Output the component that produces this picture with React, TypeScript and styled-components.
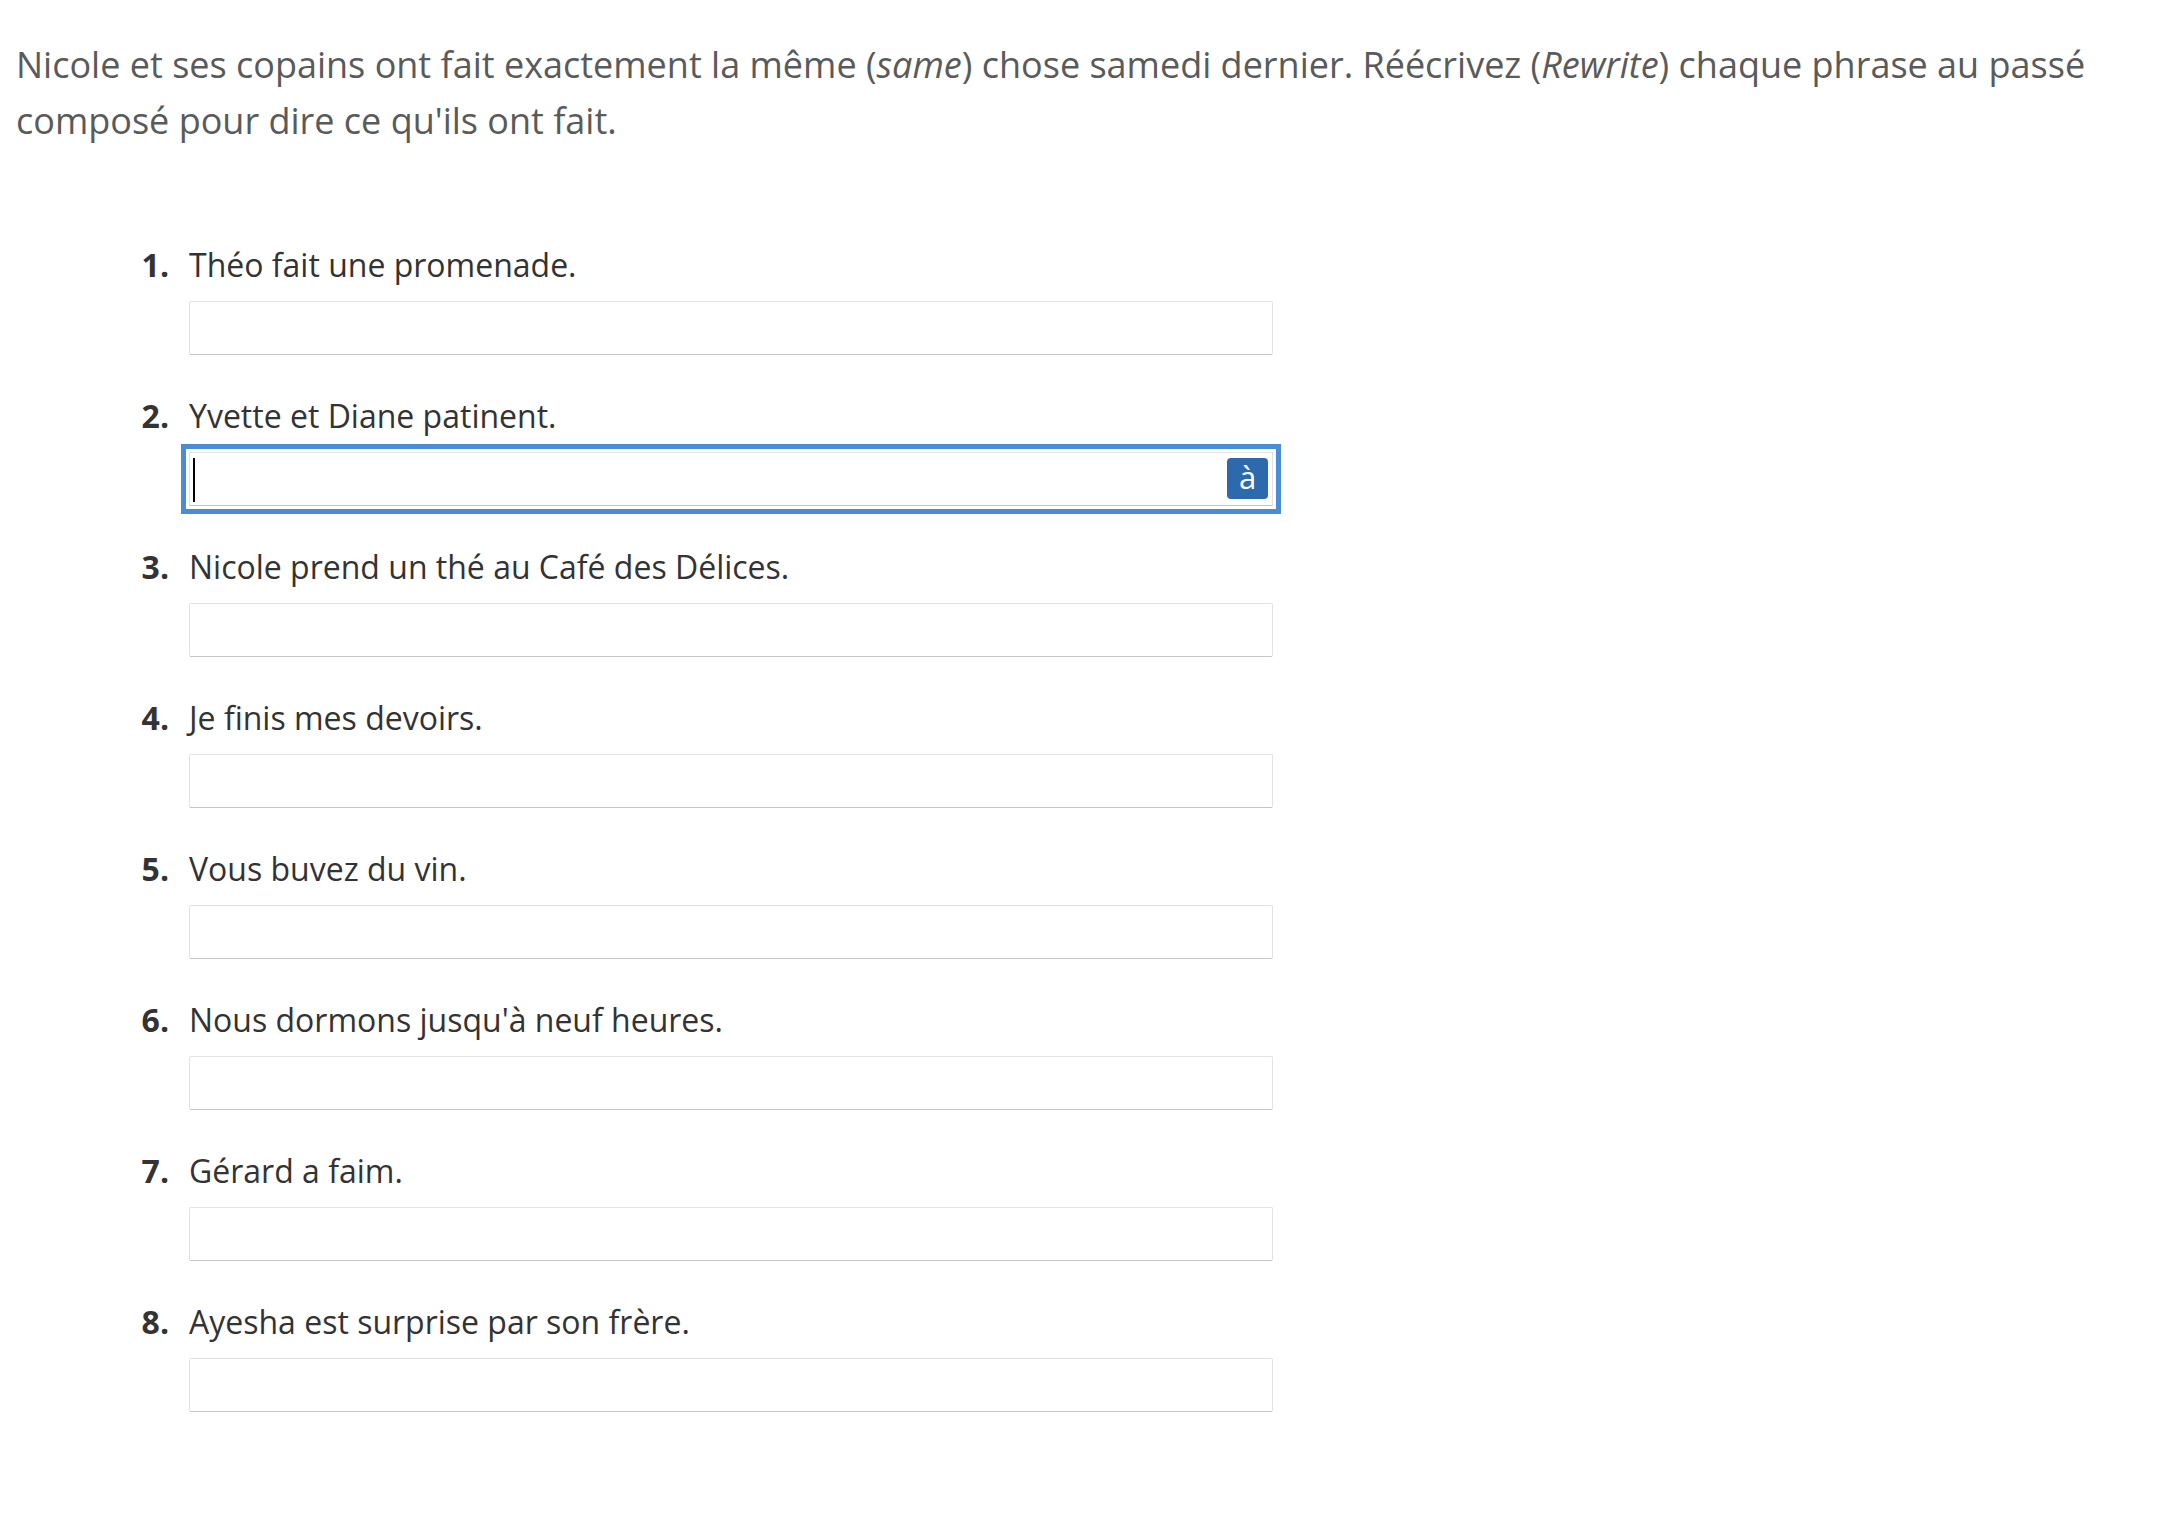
import React from "react";
import styled, { createGlobalStyle, css } from "styled-components";

const GlobalStyle = createGlobalStyle`
  body {
    margin: 0;
    background: #ffffff;
    font-family: "Open Sans", "Noto Sans", sans-serif;
  }
`;

const Page = styled.div`
  padding: 37px 16px 60px;
`;

const Instructions = styled.p`
  margin: 0;
  font-size: 36px;
  line-height: 56px;
  color: #5a5a5a;
`;

const List = styled.ol`
  list-style: none;
  margin: 95px 0 0;
  padding: 0;
`;

const Item = styled.li`
  display: grid;
  grid-template-columns: 153px 1084px;
  column-gap: 20px;
  padding-bottom: 40px;
`;

const Number = styled.span`
  text-align: right;
  font-size: 32px;
  line-height: 42px;
  font-weight: 700;
  color: #333333;
`;

const Prompt = styled.div`
  font-size: 32px;
  line-height: 42px;
  color: #333333;
`;

const Field = styled.div`
  position: relative;
  margin-top: 15px;
`;

const Input = styled.input<{ $focused?: boolean }>`
  display: block;
  box-sizing: border-box;
  width: 100%;
  height: 54px;
  padding: 0 10px;
  border: 1px solid #e3e3e3;
  border-bottom-color: #c4c4c4;
  border-radius: 2px;
  background: #ffffff;
  font-family: inherit;
  font-size: 28px;
  caret-color: transparent;
  outline: none;

  ${({ $focused }) =>
    $focused &&
    css`
      border-radius: 0;
      box-shadow: 0 0 0 3px #ffffff, 0 0 0 8px #4a8dd6;
    `}
`;

const Caret = styled.span`
  position: absolute;
  left: 4px;
  top: 6px;
  width: 2px;
  height: 44px;
  background: #000000;
`;

const AccentButton = styled.button`
  position: absolute;
  right: 5px;
  top: 6px;
  width: 41px;
  height: 41px;
  padding: 0 0 4px;
  border: none;
  border-radius: 4px;
  background: #2d69ad;
  color: #ffffff;
  font-family: "Open Sans", sans-serif;
  font-size: 31px;
  line-height: 36px;
  cursor: pointer;
`;

const sentences = [
  "Théo fait une promenade.",
  "Yvette et Diane patinent.",
  "Nicole prend un thé au Café des Délices.",
  "Je finis mes devoirs.",
  "Vous buvez du vin.",
  "Nous dormons jusqu'à neuf heures.",
  "Gérard a faim.",
  "Ayesha est surprise par son frère.",
];

const App: React.FC = () => {
  return (
    <>
      <GlobalStyle />
      <Page>
        <Instructions>
          Nicole et ses copains ont fait exactement la même (<em>same</em>) chose
          samedi dernier. Réécrivez (<em>Rewrite</em>) chaque phrase au passé
          composé pour dire ce qu'ils ont fait.
        </Instructions>
        <List>
          {sentences.map((s, i) => {
            const focused = i === 1;
            return (
              <Item key={s}>
                <Number>{i + 1}.</Number>
                <div>
                  <Prompt>{s}</Prompt>
                  <Field>
                    <Input $focused={focused} aria-label={s} />
                    {focused && (
                      <>
                        <Caret />
                        <AccentButton type="button">à</AccentButton>
                      </>
                    )}
                  </Field>
                </div>
              </Item>
            );
          })}
        </List>
      </Page>
    </>
  );
};

export default App;
